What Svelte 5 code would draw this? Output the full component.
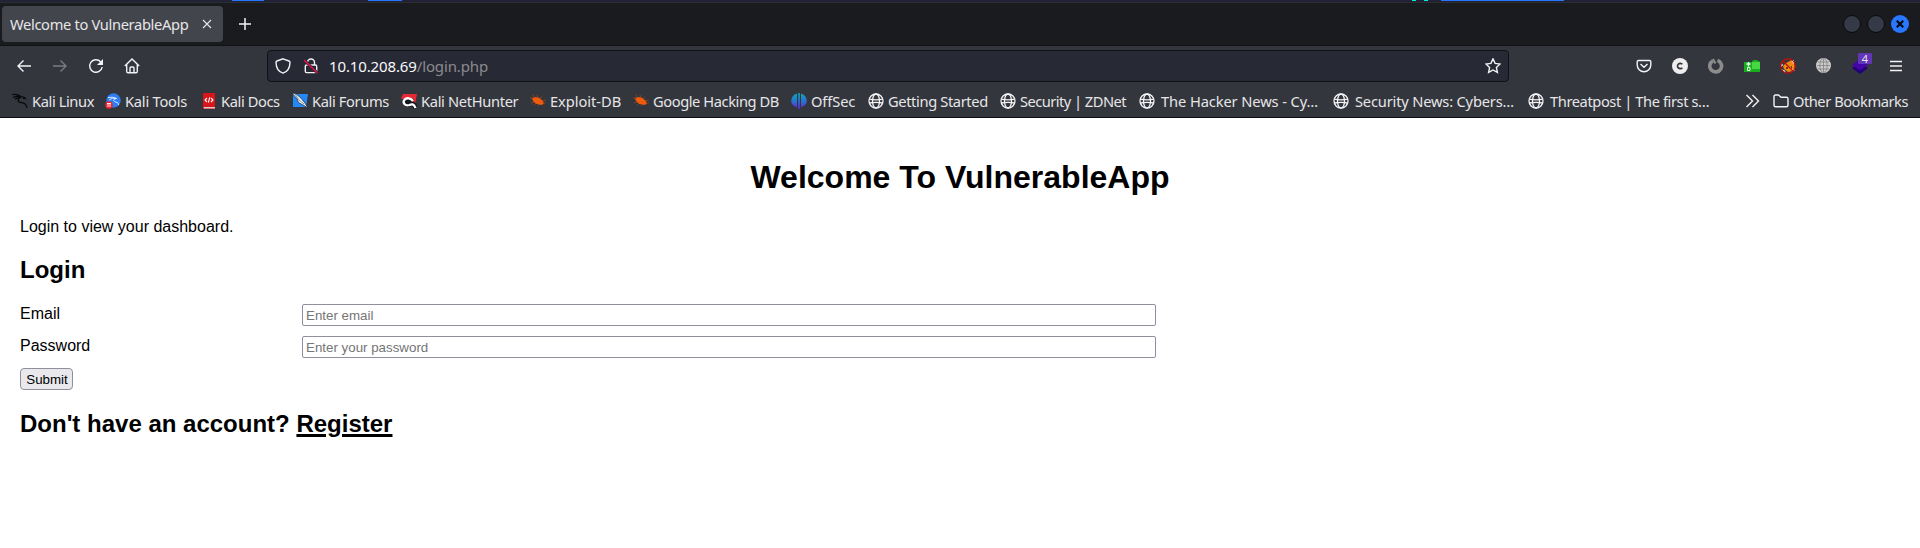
<script>
  const bookmarks = [
    { icon: 'kali', label: 'Kali Linux', width: 93, tracking: -0.4 },
    { icon: 'tools', label: 'Kali Tools', width: 96, tracking: -0.22 },
    { icon: 'docs', label: 'Kali Docs', width: 91, tracking: -0.4 },
    { icon: 'forums', label: 'Kali Forums', width: 109, tracking: -0.36 },
    { icon: 'hunter', label: 'Kali NetHunter', width: 129, tracking: -0.33 },
    { icon: 'bug', label: 'Exploit-DB', width: 103, tracking: -0.04 },
    { icon: 'bug', label: 'Google Hacking DB', width: 158, tracking: -0.42 },
    { icon: 'offsec', label: 'OffSec', width: 77, tracking: -0.1 },
    { icon: 'globe', label: 'Getting Started', width: 132, tracking: -0.37 },
    { icon: 'globe', label: 'Security | ZDNet', width: 139, tracking: -0.53 },
    { icon: 'globe', label: 'The Hacker News - Cy…', width: 194, tracking: -0.1, wide: true },
    { icon: 'globe', label: 'Security News: Cybers…', width: 195, tracking: -0.18, wide: true },
    { icon: 'globe', label: 'Threatpost | The first s…', width: 190, tracking: -0.41, wide: true }
  ];
</script>

{#snippet siteIcon(name)}
  <svg class="site" viewBox="0 0 16 16" width="16" height="16">
    {#if name === 'kali'}
      <path d="M0 1.5C4 1 7 2 9 3.5M1 4.5C4 3 7 3.2 9.4 4.2M3 6.4C5 4.5 7 4 9 4.4M9 3.5c2 .2 3.5.4 4.500 2L11 5.300M8.500 4.500C4.500 6.500 5.800 9.400 9.500 9.700c3 .3 5 1.200 5.400 5.300" fill="none" stroke="#08090b" stroke-width="1.200"/>
    {:else if name === 'tools'}
      <circle cx="8.500" cy="7.500" r="7.200" fill="#2d7df6"/>
      <path d="M3 4.500q5-1 9 1M4 7q4-3 7-1.400c-4 1-2 3.400 0 3.500 2 .2 2.600 1.500 2.500 3" fill="none" stroke="#d8e8ff" stroke-width="1"/>
      <circle cx="4" cy="12" r="3.800" fill="#e82532"/>
      <path d="M2 10.500h4M3 10.500v3.500M5 10.500v3.500" stroke="#fff" stroke-width=".9"/>
    {:else if name === 'docs'}
      <path d="M2 1q0-1 1-1h11v16H3q-1 0-1-1z" fill="#d9151b"/>
      <path d="M2.500 14h11.500v1.400H3z" fill="#d9c9ca"/>
      <path d="m6 5-2 2 2 2m4-4 2 2-2 2M8.700 4.400 7.400 9.600" fill="none" stroke="#fff" stroke-width="1.100"/>
    {:else if name === 'forums'}
      <path d="M1 1h15l-2 13H1z" fill="#2588f7"/>
      <path d="M0 0l4 .8 5 4.400 4 5L16 15l-4-2.500-5.500-3-1.300-3.400z" fill="#f5f7fa" stroke="#172436" stroke-width=".7"/>
      <path d="m3 1 4 6 5 4" fill="none" stroke="#27415e" stroke-width=".6"/>
    {:else if name === 'hunter'}
      <path d="M2 1h14l-2 10-2 1L0 5z" fill="#e52a36"/>
      <path d="M14.500 15C13 10 10.500 10.500 8.500 11.300 5.500 12.300 3.500 9.800 5 8.200 7 6.200 10 7.500 12 8.500" fill="none" stroke="#16171d" stroke-width="5"/>
      <path d="M14.500 15C13 10.500 10.500 11 8.500 12 4 13.500 1.200 9.500 3.500 6.800 5.500 4.300 10 5 12 8" fill="none" stroke="#fff" stroke-width="2.300"/>
    {:else if name === 'bug'}
      <path d="M2 5.400 5 4l4 .8 4 3.300.7 3-2.700 1-5-1.400L3 8z" fill="#f05a0b"/>
      <path d="M0 5h4M4 4 3 1.700M8 5 7 2M10 6l2-2.500M12 8l4-1M13 10l2.500.2M4 9l-3 1M6 10l-2 2M9 11l-1 2" stroke="#b94d18" stroke-width=".6"/>
    {:else if name === 'offsec'}
      <defs><linearGradient id="offsec" gradientUnits="userSpaceOnUse" x1="0" y1="0" x2="0" y2="16"><stop stop-color="#0ea9b7"/><stop offset=".5" stop-color="#2773d0"/><stop offset="1" stop-color="#6524d8"/></linearGradient></defs>
      <path d="M6 .5v13.700C2 13 0 10.500.3 7.200.6 4 2.500 1.500 6 .5zM7.200 0h1.700v16H7.200zM10 .5c3.500 1 5.500 3.500 5.700 6.700.3 3.300-1.700 5.800-5.700 7z" fill="url(#offsec)"/>
    {:else}
      <g fill="none" stroke="#f3f3f5" stroke-width="1.300"><circle cx="8" cy="8" r="7"/><ellipse cx="8" cy="8" rx="3.500" ry="7"/><path d="M1.200 6.200q6.800 1.400 13.600 0M1.200 10q6.800-1.100 13.600 0"/></g>
    {/if}
  </svg>
{/snippet}

<div class="window">
  <div class="strip"><i class="s1"></i><i class="s2"></i><i class="s3"></i><i class="s4"></i><i class="s5"></i></div>
  <header class="tabs">
    <div class="tab">
      <span>Welcome to VulnerableApp</span>
      <svg width="10" height="10" viewBox="0 0 10 10"><path d="m1 1 8 8m0-8-8 8" stroke="#e6e7ea" stroke-width="1.100"/></svg>
    </div>
    <svg class="plus" width="14" height="14" viewBox="0 0 14 14"><path d="M7 1v12M1 7h12" stroke="#f5f5f7" stroke-width="1.500"/></svg>
    <div class="controls">
      <b></b><b></b>
      <svg width="18" height="18" viewBox="0 0 18 18"><circle cx="9" cy="9" r="9" fill="#2777ff"/><path d="m5.800 5.800 6.400 6.400m0-6.400-6.400 6.400" stroke="#07090d" stroke-width="2.200"/></svg>
    </div>
  </header>

  <nav class="toolbar">
    <div class="nav">
      <svg width="16" height="16" viewBox="0 0 16 16"><path d="M15 8H2m5.500-5.500L2 8l5.500 5.500" /></svg>
      <svg class="dim" width="16" height="16" viewBox="0 0 16 16"><path d="M1 8h13M8.500 2.500 14 8l-5.500 5.500" /></svg>
      <svg width="16" height="16" viewBox="0 0 16 16"><path d="M12.600 3.700A6.300 6.300 0 1 0 14.200 9"/><path d="M15 .9v6H9z" fill="#f3f3f5" stroke="none"/></svg>
      <svg width="16" height="16" viewBox="0 0 16 16"><path d="m.8 8 7.200-7 7.200 7M2.700 6.500v7q0 1.300 1.300 1.300h8q1.300 0 1.300-1.300v-7M6 14.500V10q0-1 1-1h2q1 0 1 1v4.500"/></svg>
    </div>
    <div class="url">
      <svg width="16" height="16" viewBox="0 0 16 16"><path d="M8 .8 14 3q1 .4 1 1.500C14.800 10 12 14 8 15.200 4 14 1.200 10 1 4.500Q1 3.400 2 3z"/></svg>
      <svg class="lock" width="16" height="16" viewBox="0 0 16 16"><path d="M4.500 7V4.500a3.500 3.500 0 0 1 7 0V7M3.500 7h9q1.200 0 1.200 1.200v5q0 1.400-1.200 1.400h-9q-1.200 0-1.200-1.400v-5Q2.300 7 3.500 7z"/><path d="m1 2 13.500 13" stroke="#272934" stroke-width="3"/><path d="m1 2 13.500 13" stroke="#e4124b" stroke-width="1.500"/></svg>
      <span class="address">10.10.208.69<em>/login.php</em></span>
      <svg class="star" width="16" height="16" viewBox="0 0 16 16"><path d="m8 .9 2.100 4.500 5 .6-3.700 3.400 1 5L8 12l-4.400 2.400 1-5L.9 6l5-.6z"/></svg>
    </div>
    <div class="extensions">
      <svg width="16" height="16" viewBox="0 0 16 16"><path d="M2.500 2.500h11q1.300 0 1.300 1.300V7a6.800 6.800 0 0 1-13.600 0V3.800q0-1.300 1.300-1.300zM4.500 6 8 9.200 11.500 6"/></svg>
      <svg width="16" height="16" viewBox="0 0 16 16"><circle cx="8" cy="8" r="8" fill="#eee" stroke="none"/><path d="M10.300 6.300a2.700 2.700 0 1 0 0 3.400" stroke="#36373c" stroke-width="1.700"/></svg>
      <svg width="16" height="16" viewBox="0 0 16 16"><path d="M9.500 2.400a5.900 5.900 0 1 1-4.600.4" stroke="#8c8c8c" stroke-width="3.600"/><path d="m5 1 2.500 4.500" stroke="#8c8c8c" stroke-width="2"/></svg>
      <svg width="16" height="16" viewBox="0 0 16 16"><path d="M0 4h8l1-2h4l1 1h1l1 1v10H0z" fill="#18ae1d" stroke="none"/><path d="M8 4h8v7H8z" fill="#46d843" stroke="none"/><path d="M4.500 4v4.500M2.500 6h4" stroke="#f1fff0" stroke-width="1.400"/><path d="M3.500 9.500h2.500v3h-2.500z" stroke="#e7fbe5" stroke-width="1"/></svg>
      <svg width="16" height="16" viewBox="0 0 16 16"><path d="M3 8 6 5l4-2 1-1 3 1 1 6-2 4-5 1-4-3z" fill="#ee8b12" stroke="none"/><path d="m1.500 11 4 2-1 2zM11.500 3l2.500-1v4zM12 11l3 1-3 2zM1 4l2 3-2 2z" fill="#fff" stroke="none"/><path d="M6 10h2m3-1h1" stroke="#42210b"/><circle cx="8" cy="8" r="7.200" stroke="#c90b0b" stroke-width="1.200"/><path d="m3 3 10 10" stroke="#c90b0b" stroke-width="1.300"/></svg>
      <svg width="16" height="16" viewBox="0 0 16 16"><circle cx="7.500" cy="7.500" r="7.500" fill="#cbcbcb" stroke="none"/><path d="M7.500 1v13M1 7.500h13M2 4h11M2 11h11" stroke="#808080" stroke-width=".8"/><ellipse cx="7.500" cy="7.500" rx="3.700" ry="7" stroke="#808080" stroke-width=".8"/></svg>
      <div class="layers">
        <svg width="16" height="16" viewBox="0 0 16 16"><path d="m0 10 8-5 8 5-8 6z" fill="#210078" stroke="none"/><path d="m0 7 8-6 8 6-8 5.500z" fill="#4305a5" stroke="none"/></svg>
        <span>4</span>
      </div>
      <svg class="menu" width="16" height="16" viewBox="0 0 16 16"><path d="M2 3.500h12M2 8h12M2 12.500h12"/></svg>
    </div>
  </nav>

  <nav class="bookmarks">
    {#each bookmarks as item}
      <div class="bookmark" class:wide={item.wide} style:width="{item.width}px" style:letter-spacing="{item.tracking}px">
        {@render siteIcon(item.icon)}
        <span>{item.label}</span>
      </div>
    {/each}
    <div class="other">
      <svg width="15" height="14" viewBox="0 0 15 14"><path d="m1.500 1 6 6-6 6M7.500 1l6 6-6 6"/></svg>
      <svg width="16" height="14" viewBox="0 0 16 14"><path d="M1 11V2.500Q1 1 2.500 1h3L8 3.200h5.500Q15 3.200 15 4.700V11q0 1.800-1.500 1.800h-11Q1 12.800 1 11z"/></svg>
      <span>Other Bookmarks</span>
    </div>
  </nav>

  <main>
    <h1>Welcome To VulnerableApp</h1>
    <p>Login to view your dashboard.</p>
    <h2>Login</h2>
    <form>
      <div class="field"><label for="email">Email</label><input id="email" type="email" placeholder="Enter email"></div>
      <div class="field"><label for="password">Password</label><input id="password" type="password" placeholder="Enter your password"></div>
      <button type="button">Submit</button>
    </form>
    <h2>Don't have an account? <a href="#register">Register</a></h2>
  </main>
</div>

<style>
  :global(body) { margin: 0; background: #fff; }
  .window { width: 1920px; height: 548px; overflow: hidden; font: 14.670px/20px "Noto Sans", sans-serif; color: #e6e6e8; }
  svg { display: block; flex: none; fill: none; }
  .strip { display: flex; height: 1px; background: #22233a; border-bottom: 1px solid #20212e; box-sizing: content-box; }
  .strip i { height: 1px; background: #2777ff; }
  .s1 { margin-left: 232px; width: 32px; }
  .s2 { margin-left: 104px; width: 34px; }
  .strip .s3 { margin-left: 1010px; width: 4px; background: #00f0d2; }
  .strip .s4 { margin-left: 8px; width: 4px; background: #00f0d2; }
  .s5 { margin-left: 13px; width: 123px; }
  .tabs { display: flex; align-items: center; box-sizing: border-box; height: 44px; padding: 0 11px 0 2px; background: #1a1b1f; border-top: 1px solid #2d2e34; border-bottom: 1px solid #111216; }
  .tab { display: flex; align-items: center; box-sizing: border-box; width: 221px; height: 36px; padding: 0 11px 0 8px; border-radius: 4px; background: #43454c; justify-content: space-between; white-space: nowrap; letter-spacing: -.33px; }
  .plus { margin-left: 15px; }
  .controls { display: flex; gap: 6px; margin-left: auto; }
  .controls b { box-sizing: border-box; width: 18px; height: 18px; border: 1px solid #08090c; border-radius: 50%; background: #353a46; }
  .toolbar { display: flex; align-items: center; height: 40px; background: #34363d; }
  .nav, .extensions { display: flex; gap: 20px; }
  .nav { margin-left: 16px; }
  .nav svg, .url svg, .extensions svg { stroke: #f3f3f5; stroke-width: 1.400; }
  .nav .dim { stroke: #7b7c82; }
  .url { display: flex; align-items: center; box-sizing: border-box; width: 1242px; height: 32px; margin-left: 127px; padding: 0 7px; border: 1px solid #101116; border-radius: 4px; background: #272934; color: #f8f8fa; font-size: 15px; letter-spacing: -.13px; }
  .lock { margin-left: 12px; }
  .address { margin-left: 10px; }
  em { font-style: normal; color: #8b8b90; }
  .star { margin-left: auto; }
  .extensions { margin-left: 127px; }
  .layers { position: relative; }
  .layers span { position: absolute; left: 6px; top: -5px; width: 14px; height: 11px; border-radius: 1px; background: #6335b9; font-size: 11px; line-height: 11px; text-align: center; }
  .bookmarks { display: flex; align-items: center; box-sizing: border-box; height: 32px; padding: 0 12px 1px; background: #34363d; border-bottom: 1px solid #0c0d10; }
  .bookmark { display: flex; align-items: center; gap: 4px; flex: none; white-space: nowrap; }
  .bookmark.wide { gap: 6px; }
  .other { display: flex; align-items: center; margin-left: auto; white-space: nowrap; letter-spacing: -.45px; }
  .other svg { stroke: #f3f3f5; stroke-width: 1.400; }
  .other svg + svg { margin: 0 4px 0 13px; }
  main { padding: 20px; font: 16px/18.400px "Liberation Sans", Arial, sans-serif; color: #000; display: flow-root; }
  h1 { margin: 21px 0; font-size: 32px; line-height: 37px; text-align: center; }
  p { margin: 0; line-height: 19px; }
  h2 { margin: 20px 0; font-size: 24px; line-height: 28px; }
  .field { display: flex; height: 22px; margin-bottom: 10px; }
  label { width: 282px; padding-top: 1px; }
  input { box-sizing: border-box; width: 854px; height: 22px; padding: 1px 3px; border: 1px solid #8f8f9d; border-radius: 2px; font: 13.333px "Liberation Sans", Arial, sans-serif; }
  input::placeholder { color: #757575; }
  button { display: block; box-sizing: border-box; width: 53px; height: 22px; padding: 1px 0 0 1px; border: 1px solid #8f8f9d; border-radius: 4px; background: #e9e9ed; color: #000; font: 13.333px "Liberation Sans", Arial, sans-serif; }
  a { color: #000; text-decoration-thickness: 3px; }
</style>
